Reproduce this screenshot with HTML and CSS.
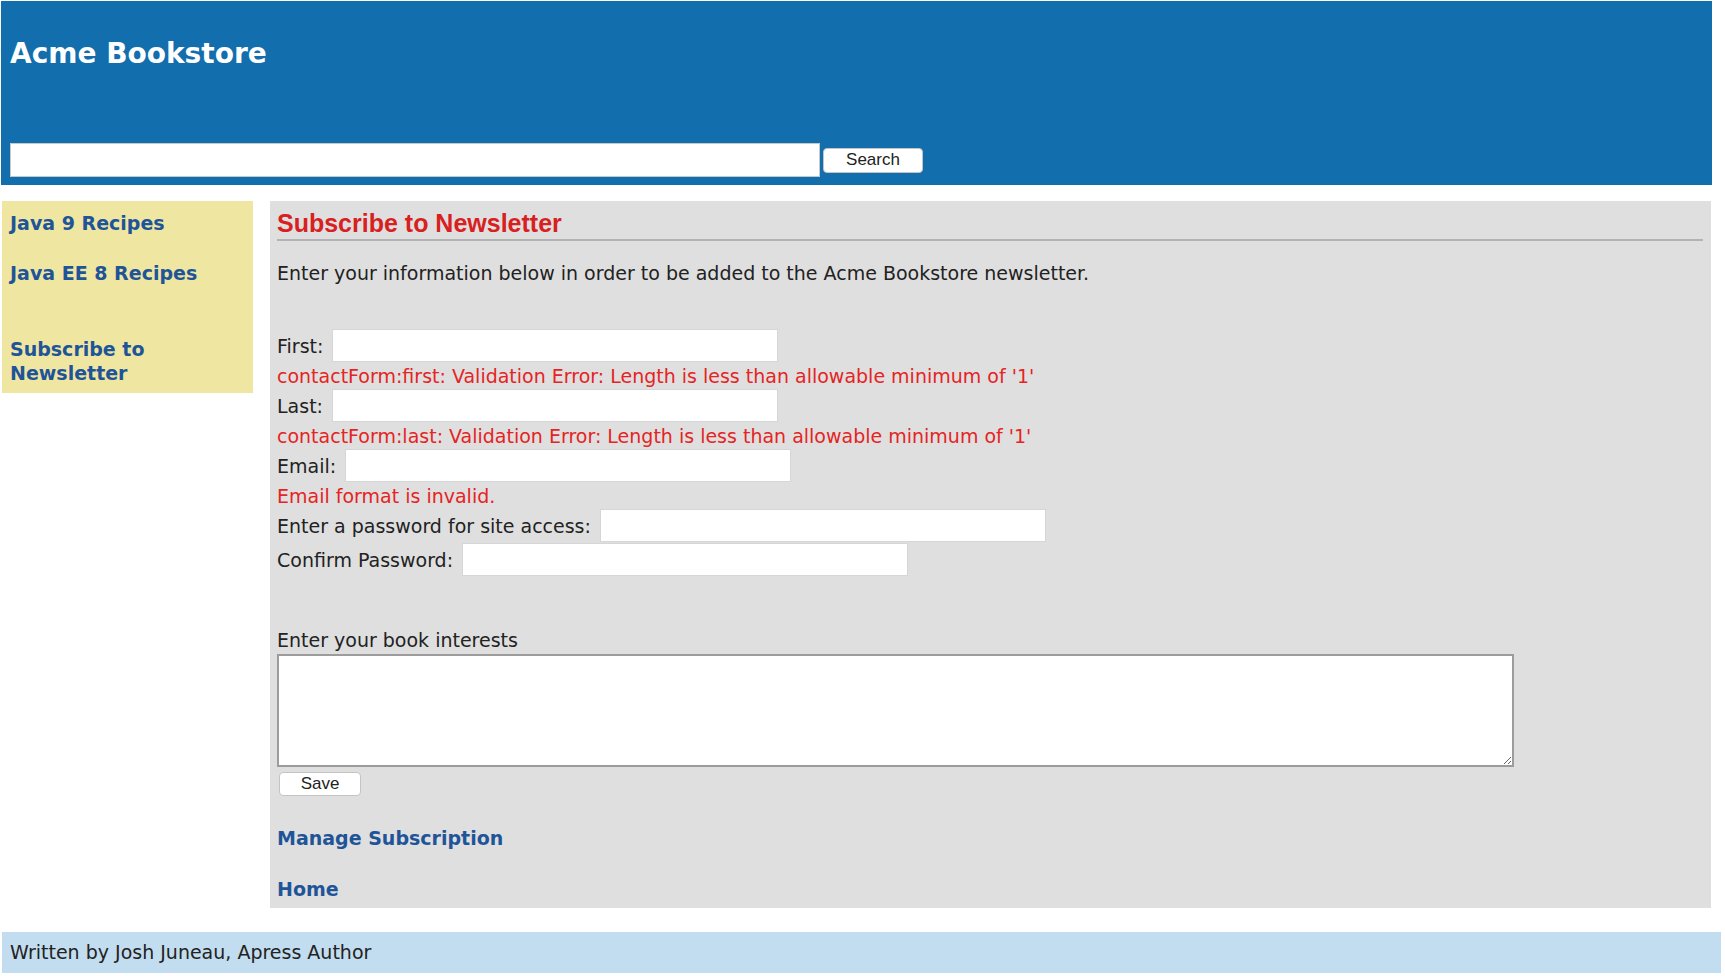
FILE: index.html
```html
<!DOCTYPE html>
<html>
<head>
    <title>Acme Bookstore - Subscribe to Newsletter</title>
    <link rel="stylesheet" href="styles.css">
</head>
<body>
    <div class="header">
        <h1 class="brand">Acme Bookstore</h1>
        <form class="search-bar" name="searchForm">
            <input type="text" class="search-input" name="searchText">
            <input type="submit" class="btn btn-search" value="Search">
        </form>
    </div>

    <div class="layout">
        <div class="sidebar">
            <a class="side-link" href="#">Java 9 Recipes</a>
            <a class="side-link second" href="#">Java EE 8 Recipes</a>
            <a class="side-link third" href="#">Subscribe to Newsletter</a>
        </div>

        <div class="content">
            <h2 class="page-title">Subscribe to Newsletter</h2>
            <p class="intro">Enter your information below in order to be added to the Acme Bookstore newsletter.</p>

            <form name="contactForm" class="contact-form">
                <div class="form-row">
                    <label for="first">First:</label>
                    <input type="text" id="first" name="first">
                </div>
                <div class="field-error">contactForm:first: Validation Error: Length is less than allowable minimum of '1'</div>

                <div class="form-row">
                    <label for="last">Last:</label>
                    <input type="text" id="last" name="last">
                </div>
                <div class="field-error">contactForm:last: Validation Error: Length is less than allowable minimum of '1'</div>

                <div class="form-row">
                    <label for="email">Email:</label>
                    <input type="text" id="email" name="email">
                </div>
                <div class="field-error">Email format is invalid.</div>

                <div class="form-row">
                    <label for="password">Enter a password for site access:</label>
                    <input type="password" id="password" name="password">
                </div>
                <div class="form-row confirm-row">
                    <label for="confirm">Confirm Password:</label>
                    <input type="password" id="confirm" name="confirm">
                </div>

                <label class="interests-label" for="interests">Enter your book interests</label>
                <textarea id="interests" name="interests"></textarea>
                <input type="submit" class="btn btn-save" value="Save">
            </form>

            <a class="content-link manage" href="#">Manage Subscription</a>
            <a class="content-link home" href="#">Home</a>
        </div>
    </div>

    <div class="footer">Written by Josh Juneau, Apress Author</div>
</body>
</html>
```

FILE: styles.css
```css
body {
    margin: 0;
    font-family: "DejaVu Sans", Verdana, sans-serif;
    font-size: 19px;
    color: #222;
    background: #fff;
}

.header {
    margin: 1px 13px 0 1px;
    padding: 36px 9px 8px 9px;
    background: #126ead;
}

.brand {
    margin: 0 0 73px 0;
    font-size: 28px;
    line-height: 33px;
    font-weight: bold;
    color: #fff;
}

.search-bar {
    display: flex;
    align-items: center;
    gap: 3px;
    margin: 0;
}

.search-input {
    width: 810px;
    height: 34px;
    box-sizing: border-box;
    margin: 0;
    border: 1px solid #c9c9c9;
    background: #fff;
}

.btn {
    margin: 0;
    padding: 0;
    background: #fff;
    border: 1px solid #c4c4c4;
    border-radius: 4px;
    font-family: "Liberation Sans", Arial, sans-serif;
    font-size: 17px;
    color: #222;
    box-sizing: border-box;
}

.btn-search {
    width: 100px;
    height: 25px;
}

.layout {
    display: flex;
    align-items: flex-start;
    gap: 17px;
    margin: 16px 14px 0 2px;
}

.sidebar {
    width: 251px;
    flex: none;
    box-sizing: border-box;
    padding: 10px 8px 8px 8px;
    background: #efe6a1;
}

.side-link,
.content-link {
    display: block;
    font-weight: bold;
    color: #1f5598;
    text-decoration: none;
}

.side-link {
    line-height: 24px;
}

.side-link.second {
    margin-top: 26px;
}

.side-link.third {
    margin-top: 52px;
}

.content {
    flex: 1;
    padding: 8px 8px 5px 7px;
    background: #dfdfdf;
}

.page-title {
    margin: 0;
    padding-bottom: 1px;
    border-bottom: 2px solid #b3b3b3;
    font-family: "Liberation Sans", Arial, sans-serif;
    font-size: 25px;
    line-height: 29px;
    font-weight: bold;
    color: #d8211f;
}

.intro {
    margin: 19px 0 0 0;
    line-height: 27px;
}

.contact-form {
    margin: 42px 0 0 0;
}

.form-row {
    display: flex;
    align-items: center;
    gap: 9px;
    height: 33px;
}

.form-row input {
    width: 446px;
    height: 33px;
    box-sizing: border-box;
    margin: 0;
    border: 1px solid #d6d6d6;
    background: #fff;
}

.confirm-row {
    margin-top: 1px;
}

.field-error {
    line-height: 27px;
    padding-top: 1px;
    margin-bottom: -1px;
    color: #e52424;
}

.interests-label {
    display: block;
    margin-top: 51px;
    line-height: 27px;
}

.contact-form textarea {
    display: block;
    width: 1237px;
    height: 113px;
    box-sizing: border-box;
    margin: 0;
    border: 2px solid #9c9c9c;
    background: #fff;
}

.btn-save {
    display: block;
    width: 82px;
    height: 24px;
    margin: 5px 0 0 2px;
}

.content-link {
    line-height: 27px;
}

.content-link.manage {
    margin-top: 29px;
}

.content-link.home {
    margin-top: 24px;
}

.footer {
    margin: 24px 4px 0 2px;
    padding: 0 8px;
    height: 41px;
    line-height: 41px;
    background: #c2ddef;
}
```
